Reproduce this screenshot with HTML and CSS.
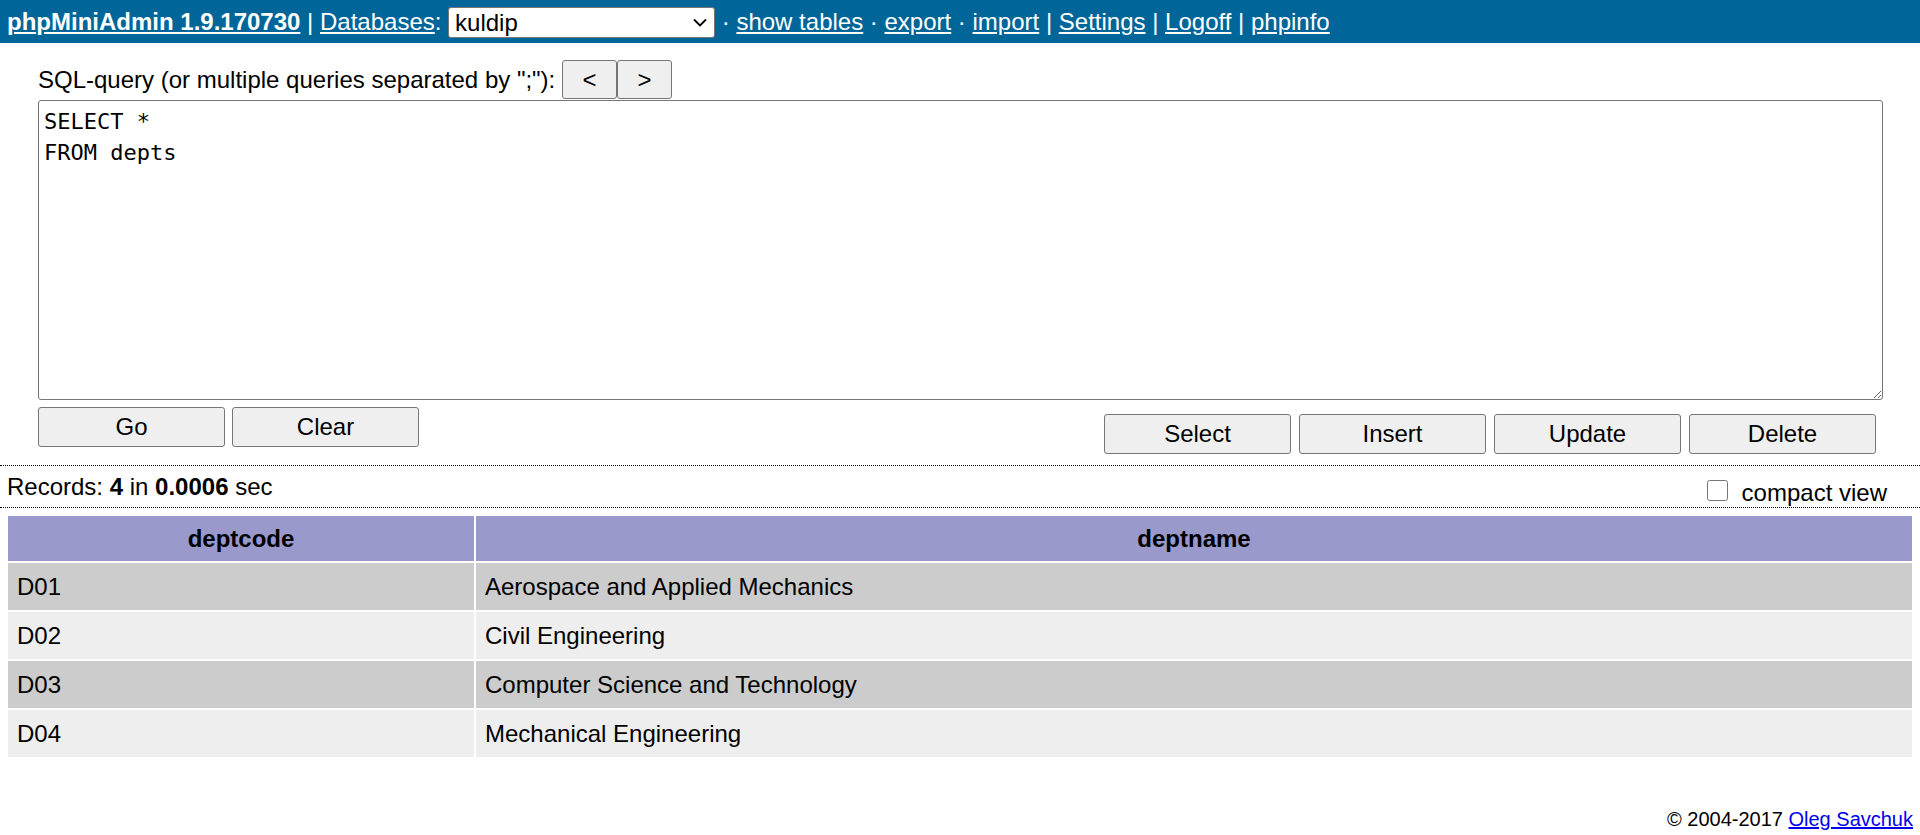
FILE: index.html
```html
<!DOCTYPE html>
<html>
<head>
<meta charset="utf-8">
<title>phpMiniAdmin</title>
<link rel="stylesheet" href="styles.css">
</head>
<body>
<div class="topbar">
<a class="brand" href="#"><b>phpMiniAdmin 1.9.170730</b></a> | <a href="#">Databases</a>: <span class="selwrap"><select class="dbsel"><option>kuldip</option></select><svg class="chev" width="14" height="9" viewBox="0 0 14 9"><path d="M1 1.5 L7 7.5 L13 1.5" fill="none" stroke="#000" stroke-width="1.8"/></svg></span> · <a href="#">show tables</a> · <a href="#">export</a> · <a href="#">import</a> | <a href="#">Settings</a> | <a href="#">Logoff</a> | <a href="#">phpinfo</a>
</div>

<div class="queryform">
  <div class="qlabel">SQL-query (or multiple queries separated by ";"): <button class="qnav">&lt;</button><button class="qnav">&gt;</button></div>
  <textarea class="sql" spellcheck="false">SELECT *
FROM depts</textarea>
  <div class="btnrow">
    <div class="btngroup">
      <button class="sbtn">Go</button>
      <button class="sbtn">Clear</button>
    </div>
    <div class="btngroup right">
      <button class="sbtn">Select</button>
      <button class="sbtn">Insert</button>
      <button class="sbtn">Update</button>
      <button class="sbtn">Delete</button>
    </div>
  </div>
</div>

<div class="records">
  <div class="recinfo">Records: <b>4</b> in <b>0.0006</b> sec</div>
  <label class="compact"><input type="checkbox" class="cb"><span>compact view</span></label>
</div>

<table class="res">
  <thead>
    <tr class="h"><th class="c1">deptcode</th><th>deptname</th></tr>
  </thead>
  <tbody>
    <tr class="e"><td>D01</td><td>Aerospace and Applied Mechanics</td></tr>
    <tr class="o"><td>D02</td><td>Civil Engineering</td></tr>
    <tr class="e"><td>D03</td><td>Computer Science and Technology</td></tr>
    <tr class="o"><td>D04</td><td>Mechanical Engineering</td></tr>
  </tbody>
</table>

<div class="ft">© 2004-2017 <a href="#">Oleg Savchuk</a></div>
</body>
</html>
```

FILE: styles.css
```css
* { box-sizing: border-box; }
body {
  margin: 0;
  font-family: "Liberation Sans", Arial, sans-serif;
  font-size: 24px;
  color: #000;
  background: #fff;
}
.topbar {
  background-color: #006699;
  color: #fff;
  height: 43px;
  line-height: 43px;
  padding: 0 7px;
  white-space: nowrap;
}
.topbar a { color: #fff; text-decoration: underline; }
.selwrap {
  position: relative;
  display: inline-block;
  vertical-align: middle;
  height: 31px;
  line-height: normal;
  margin-top: -2px;
}
.dbsel {
  -webkit-appearance: none;
  appearance: none;
  display: block;
  font-family: "Liberation Sans", Arial, sans-serif;
  font-size: 24px;
  width: 267px;
  height: 31px;
  border: 1px solid #767676;
  border-radius: 3px;
  background: #fff;
  color: #000;
  padding: 0 30px 0 6px;
  margin: 0;
}
.chev {
  position: absolute;
  right: 8px;
  top: 11px;
  pointer-events: none;
}
.queryform {
  padding: 17px 37px 11px 38px;
  border-bottom: 1px dotted #000;
}
.qlabel {
  line-height: 39px;
  height: 40px;
  white-space: nowrap;
}
button {
  font-family: "Liberation Sans", Arial, sans-serif;
  font-size: 24px;
  color: #000;
  background: #efefef;
  border: 1px solid #767676;
  border-radius: 3px;
  padding: 0;
}
.qnav {
  width: 55px;
  height: 39px;
  vertical-align: top;
}
.sql {
  display: block;
  width: 100%;
  height: 300px;
  font-family: "DejaVu Sans Mono", "Liberation Mono", monospace;
  font-size: 22px;
  line-height: 31px;
  padding: 5px 5px;
  border: 1px solid #767676;
  border-radius: 3px;
  color: #000;
  margin: 0;
}
.btnrow {
  display: flex;
  justify-content: space-between;
  align-items: flex-start;
  margin-top: 7px;
  padding-right: 7px;
}
.btngroup {
  display: flex;
  gap: 7px;
}
.btngroup.right {
  margin-top: 7px;
  gap: 8px;
}
.sbtn {
  width: 187px;
  height: 40px;
}
.records {
  display: flex;
  justify-content: space-between;
  align-items: flex-start;
  height: 42px;
  padding: 7px 33px 0 7px;
  border-bottom: 1px dotted #000;
  line-height: 27px;
}
.compact {
  display: flex;
  align-items: flex-end;
  margin-top: 6px;
}
.cb {
  width: 21px;
  height: 21px;
  margin: 0 14px 5px 0;
}
table.res {
  border-collapse: collapse;
  width: calc(100% - 12px);
  margin: 6px 6px 0 6px;
}
table.res th, table.res td {
  border: 2px solid #fff;
  padding: 10px 9px 10px 9px;
  line-height: 27px;
  vertical-align: top;
  text-align: left;
}
table.res th {
  text-align: center;
  font-weight: bold;
  padding: 9px 9px 9px 9px;
}
th.c1 { width: 468px; }
tr.h { background-color: #9999cc; }
tr.e { background-color: #cccccc; }
tr.o { background-color: #eeeeee; }
.ft {
  text-align: right;
  font-size: 20px;
  line-height: 23px;
  margin-top: 49px;
  padding: 0 7px;
}
.ft a { color: #0000ee; }
```
